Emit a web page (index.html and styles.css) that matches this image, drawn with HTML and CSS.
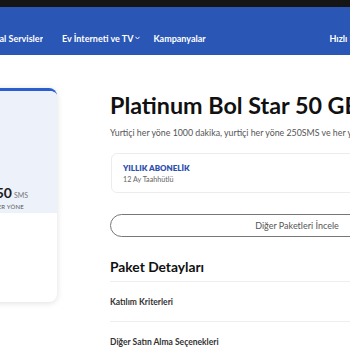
FILE: index.html
```html
<!DOCTYPE html>
<html lang="tr">
<head>
<meta charset="utf-8">
<link rel="stylesheet" href="styles.css">
</head>
<body>
<div class="topbar"></div>
<nav class="nav">
  <div class="nav-first"><span>Dijital Servisler</span></div>
  <div class="nav-item">Ev İnterneti ve TV<svg class="caret" viewBox="0 0 6 4" width="5" height="4"><path d="M0.5 0.5 L3 3.2 L5.5 0.5" fill="none" stroke="#fff" stroke-width="1.2"/></svg></div>
  <div class="nav-item">Kampanyalar</div>
  <div class="nav-item nav-right">Hızlı İşlemler</div>
</nav>
<main class="page">
  <aside class="card">
    <div class="card-top">
      <div class="stat">
        <div class="stat-val"><b>250</b><span>SMS</span></div>
        <div class="stat-sub">HER YÖNE</div>
      </div>
    </div>
  </aside>
  <section class="detail">
    <h1 class="title">Platinum Bol Star 50 GB</h1>
    <p class="desc">Yurtiçi her yöne 1000 dakika, yurtiçi her yöne 250SMS ve her yöne 50 GB internet</p>
    <div class="plan">
      <div class="plan-name">YILLIK ABONELİK</div>
      <div class="plan-sub">12 Ay Taahhütlü</div>
    </div>
    <button class="more">Diğer Paketleri İncele</button>
    <h2 class="sect">Paket Detayları</h2>
    <div class="row">Katılım Kriterleri</div>
    <div class="row">Diğer Satın Alma Seçenekleri</div>
  </section>
</main>
</body>
</html>
```
FILE: styles.css
```css
html, body {
  margin: 0;
  padding: 0;
  width: 350px;
  height: 350px;
  overflow: hidden;
  background: #fff;
  font-family: "Lato", "Liberation Sans", sans-serif;
}
.topbar {
  height: 7px;
  background: #151515;
}
.nav {
  height: 48px;
  box-sizing: border-box;
  padding-top: 14px;
  background: #2a56b6;
  display: flex;
  align-items: center;
  color: #fff;
  font-weight: 700;
  font-size: 9px;
  white-space: nowrap;
}
.nav-first {
  width: 43px;
  overflow: hidden;
  display: flex;
  justify-content: flex-end;
  margin-right: 19px;
}
.nav-item {
  margin-right: 13px;
  display: flex;
  align-items: center;
}
.caret {
  margin-left: 2px;
}
.nav-right {
  margin-left: auto;
  margin-right: -31px;
}
.page {
  display: flex;
  padding-top: 33px;
}
.card {
  flex: none;
  width: 200px;
  height: 211px;
  margin-left: -143px;
  border-top: 3px solid #2b5ed0;
  border-radius: 8px;
  box-shadow: 0 1px 6px rgba(0, 0, 0, 0.13);
  overflow: hidden;
  background: #fff;
}
.card-top {
  height: 122px;
  background: #edf1fa;
  display: flex;
  justify-content: flex-end;
  align-items: flex-end;
  padding-right: 29px;
  box-sizing: border-box;
  padding-bottom: 3px;
}
.stat-val {
  white-space: nowrap;
}
.stat-val b {
  font-size: 14px;
  font-weight: 700;
  color: #1b1b1b;
}
.stat-val span {
  font-size: 7px;
  color: #777;
  margin-left: 2px;
}
.stat-sub {
  font-size: 6px;
  letter-spacing: 0.2px;
  color: #555;
  margin-top: 2px;
  text-align: right;
  padding-right: 4px;
  white-space: nowrap;
}
.detail {
  flex: none;
  width: 374px;
  margin-left: 53px;
}
.title {
  margin: 2px 0 0;
  font-size: 23.3px;
  font-weight: 700;
  color: #111;
  white-space: nowrap;
  line-height: 30px;
}
.desc {
  margin: 7px 0 0;
  font-size: 8.8px;
  color: #555;
  white-space: nowrap;
}
.plan {
  margin-top: 15px;
  margin-left: 1px;
  border: 1px solid #ececec;
  border-radius: 6px;
  height: 40px;
  box-sizing: border-box;
  padding: 9px 11px 0;
}
.plan-name {
  font-size: 8px;
  font-weight: 800;
  color: #2f4fae;
}
.plan-sub {
  font-size: 7.2px;
  color: #666;
  margin-top: 2px;
}
.more {
  display: block;
  margin-top: 21px;
  width: 374px;
  height: 23px;
  border: 1px solid #777;
  border-radius: 12px;
  background: #fff;
  font-family: inherit;
  font-size: 9px;
  color: #555;
  padding: 0;
}
.sect {
  margin: 21px 0 0;
  font-size: 13.8px;
  font-weight: 700;
  color: #111;
  line-height: 18px;
  padding-bottom: 5px;
  border-bottom: 1px solid #eee;
}
.row {
  height: 39px;
  display: flex;
  align-items: center;
  font-size: 8.5px;
  font-weight: 700;
  color: #333;
  border-bottom: 1px solid #eee;
}
```
